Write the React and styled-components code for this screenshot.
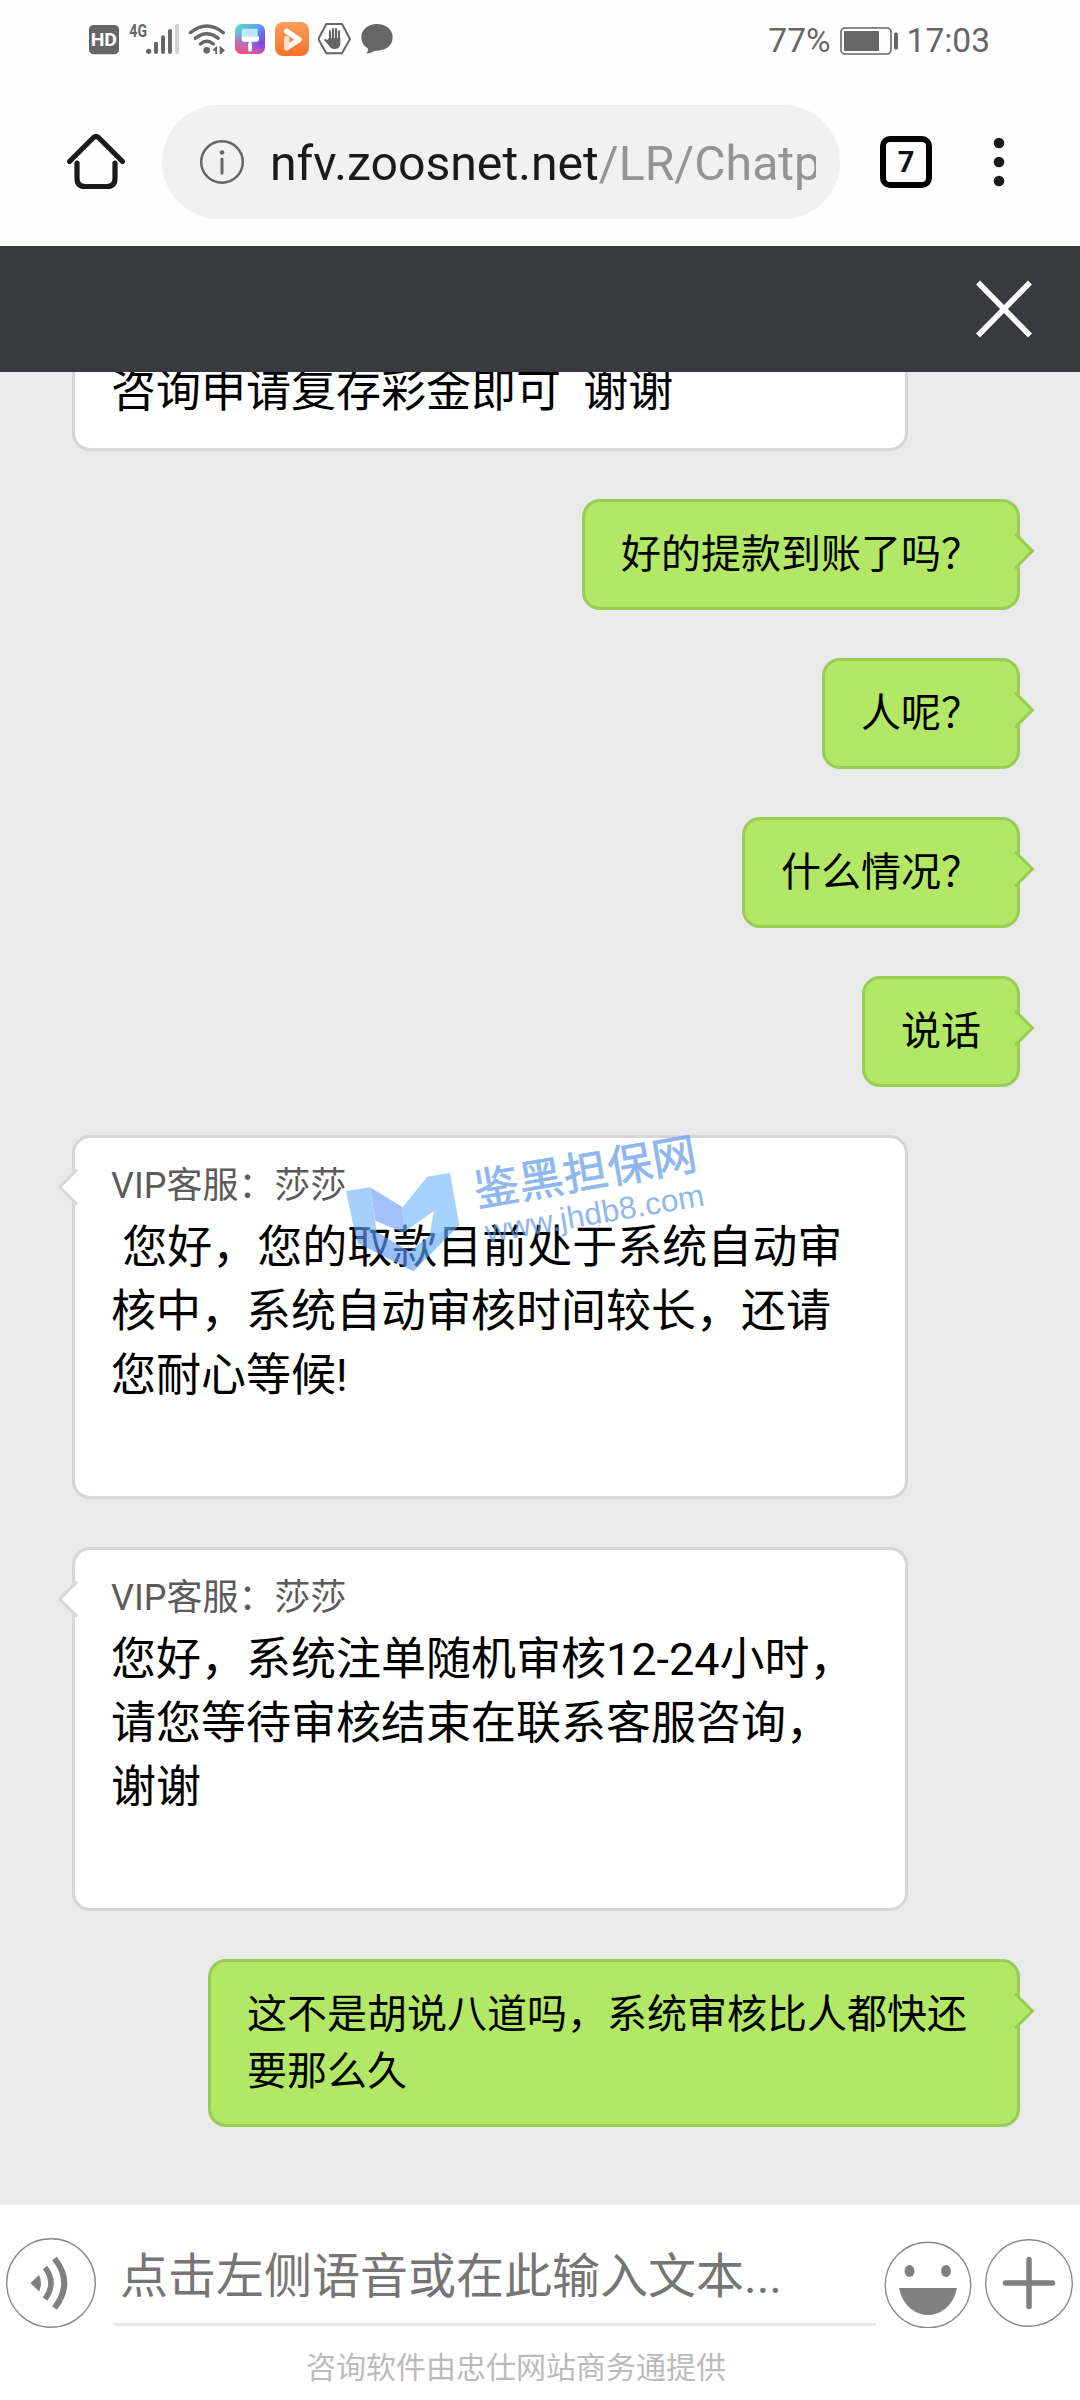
import styled, { createGlobalStyle } from 'styled-components'

const GlobalStyle = createGlobalStyle`
    * {
        box-sizing: border-box;
    }

    body {
        margin: 0;
        background: #fefefe;
        font-family: Roboto, "Noto Sans CJK SC", sans-serif;
    }
`

const Page = styled.div`
    display: flex;
    flex-direction: column;
    height: 2400px;
    overflow: hidden;
    position: relative;
    width: 1080px;
`

const StatusBar = styled.header`
    align-items: center;
    color: #666;
    display: flex;
    height: 80px;
    justify-content: space-between;
    padding: 0 90px 0 89px;
`

const StatusIcons = styled.div`
    display: flex;
    gap: 9px;
`

const StatusInfo = styled.div`
    align-items: center;
    display: flex;
    font-size: 33.5px;
    gap: 9px;
    line-height: 40px;
    padding-top: 1px;
`

const BrowserBar = styled.div`
    align-items: center;
    display: flex;
    height: 166px;
    padding: 0 64px 2px;
`

const AddressBar = styled.div`
    align-items: center;
    background: #f1f1f1;
    border-radius: 57px;
    display: flex;
    flex-shrink: 0;
    gap: 25px;
    height: 114px;
    margin: 0 40px 0 34px;
    padding: 0 24px 0 37px;
    width: 678px;
`

const Url = styled.div`
    color: #949494;
    flex: 1;
    font-size: 48.2px;
    line-height: 60px;
    overflow: hidden;
    padding-top: 3px;
    white-space: nowrap;
`

const Host = styled.span`
    color: #1a1a1a;
`

const TabCount = styled.div`
    align-items: center;
    border: 6px solid #000;
    border-radius: 10px;
    color: #111;
    display: flex;
    flex-shrink: 0;
    font: bold 29px Roboto, sans-serif;
    height: 52px;
    justify-content: center;
    margin-right: 61px;
    width: 52px;
`

const TitleBar = styled.div`
    align-items: center;
    background: #393a3f;
    display: flex;
    flex-shrink: 0;
    height: 126px;
    justify-content: flex-end;
    padding-right: 46px;
`

const Chat = styled.main`
    background: #eaeaea;
    display: flex;
    flex: 1;
    flex-direction: column;
    gap: 48px;
    justify-content: flex-end;
    min-height: 0;
    overflow: hidden;
    padding: 0 60px 78px 72px;
`

const Bubble = styled.div`
    border: 3px solid;
    border-radius: 18px;
    flex-shrink: 0;
    position: relative;

    &::after {
        border: 3px solid;
        border-color: inherit;
        background: inherit;
        content: '';
        height: 23px;
        position: absolute;
        transform: rotate(45deg);
        width: 23px;
    }
`

const AgentBubble = styled(Bubble)`
    align-self: flex-start;
    background: #fff;
    border-color: #d6d6d6;
    color: #000;
    font-size: 45px;
    height: 364px;
    line-height: 64px;
    padding: 20px 36px;
    white-space: pre;
    width: 836px;

    &::after {
        border-right: 0;
        border-top: 0;
        left: -12px;
        top: 36px;
    }
`

const UserBubble = styled(Bubble)`
    align-self: flex-end;
    background: #b2e866;
    border-color: #99cc55;
    color: #000;
    font-size: 40px;
    line-height: 57px;
    max-width: 812px;
    padding: 24px 36px;

    &::after {
        border-bottom: 0;
        border-left: 0;
        right: -12px;
        top: 36px;
    }
`

const AgentName = styled.div`
    color: #5b5b5b;
    font-size: 36px;
    line-height: 57px;
    margin-bottom: 1px;
`

const Composer = styled.footer`
    background: #fff;
    flex-shrink: 0;
    height: 195px;
    padding: 33px 6px 0;
`

const InputRow = styled.div`
    align-items: center;
    display: flex;
    height: 90px;
`

const Input = styled.div`
    border-bottom: 3px solid #e8e8e8;
    color: #757575;
    font-size: 48px;
    height: 86px;
    line-height: 66px;
    margin: 0 8px 0 18px;
    padding: 4px 6px;
    white-space: nowrap;
    width: 762px;
`

const Credit = styled.div`
    color: #bbb;
    font-size: 30px;
    line-height: 40px;
    margin-top: 20px;
    padding-right: 48px;
    text-align: center;
`

const Watermark = styled.svg`
    left: 320px;
    pointer-events: none;
    position: absolute;
    top: 1110px;
`

const StatusIcon = ({ x, width, children }) => (
    <svg width={width} height="40" viewBox={`${x} 60 ${width * 3} 120`} fill="#666">
        {children}
    </svg>
)

const HdIcon = () => (
    <StatusIcon x={87} width={30}>
        <rect x="87" y="75" width="90" height="88" rx="14" />
        <text x="92" y="139" fill="#fff" fontSize="56" fontWeight="700" textLength="79" lengthAdjust="spacingAndGlyphs">HD</text>
    </StatusIcon>
)

const SignalIcon = () => (
    <StatusIcon x={204} width={51}>
        <text x="208" y="112" fontSize="54" fontWeight="700" textLength="53" lengthAdjust="spacingAndGlyphs">4G</text>
        <circle cx="266" cy="154" r="8" />
        <g stroke="#666" strokeWidth="12" strokeLinecap="round">
            <path d="M288 131V156M309 112V156M330 93V156" />
            <path d="M351 77V156" stroke="#d2d2d2" />
        </g>
    </StatusIcon>
)

const WifiIcon = () => (
    <StatusIcon x={384} width={38}>
        <g fill="none" stroke="#666" strokeWidth="10" strokeLinecap="round">
            <path d="M391 98Q440 58 490 98" />
            <path d="M406 115Q440 87 475 115" />
            <path d="M421 132Q440 116 460 132" />
        </g>
        <circle cx="440" cy="151" r="10" />
        <path d="M457 151L471 137V162H466V153ZM479 137L495 151L484 162H479Z" />
    </StatusIcon>
)

const BrushIcon = () => (
    <StatusIcon x={525} width={31}>
        <defs>
            <linearGradient id="brushTop" x1="0" y1="0" x2="1" y2="1">
                <stop offset="0" stopColor="#5fe3c8" />
                <stop offset=".45" stopColor="#5a9bf0" />
                <stop offset=".75" stopColor="#7a4be0" />
                <stop offset="1" stopColor="#b043c8" />
            </linearGradient>
            <linearGradient id="brushBottom" x1="0.1" y1="1" x2="0.4" y2="0.45">
                <stop offset="0" stopColor="#ff4a5c" />
                <stop offset=".5" stopColor="#e65aa0" stopOpacity=".8" />
                <stop offset="1" stopColor="#e65aa0" stopOpacity="0" />
            </linearGradient>
        </defs>
        <rect x="525" y="72" width="90" height="90" rx="20" fill="url(#brushTop)" />
        <rect x="525" y="72" width="90" height="90" rx="20" fill="url(#brushBottom)" />
        <path d="M550 86H593V109H545V91Q545 86 550 86Z" fill="#bfe6fb" />
        <path d="M545 109H597V118Q597 125 590 125H575V130H566V125H552Q545 125 545 118Z" fill="#fff" />
        <path d="M570 133V149" stroke="#fff" strokeWidth="11" strokeLinecap="round" />
    </StatusIcon>
)

const VideoIcon = () => (
    <StatusIcon x={645} width={34}>
        <defs>
            <linearGradient id="video" x1="0" y1="0" x2="0" y2="1">
                <stop offset="0" stopColor="#f9a05a" />
                <stop offset="1" stopColor="#f4702a" />
            </linearGradient>
        </defs>
        <rect x="645" y="66" width="102" height="102" rx="24" fill="url(#video)" />
        <path d="M680 94L717 119L680 143" fill="none" stroke="#fff" strokeWidth="16" strokeLinejoin="round" strokeLinecap="round" />
        <path d="M680 115V143" stroke="#fde0cb" strokeWidth="16" strokeLinecap="round" />
    </StatusIcon>
)

const HandIcon = () => (
    <StatusIcon x={774} width={34}>
        <path d="M799 72H846L870 117L846 160H799L775 117Z" fill="none" stroke="#666" strokeWidth="6" strokeLinejoin="round" />
        <g stroke="#666" strokeLinecap="round" strokeWidth="6.5" fill="none">
            <path d="M810 120V94M819 120V87M828 120V87M837 120V94M808 132L796 120" />
        </g>
        <path d="M807 114H841V130Q841 147 825 147Q813 147 807 137L798 124Z" />
    </StatusIcon>
)

const MessageIcon = () => (
    <StatusIcon x={901} width={32}>
        <path d="M949 72C976 72 996 89 996 112C996 136 976 152 950 152C942 152 938 154 933 157C928 160 922 161 917 161C922 155 923 150 921 145C909 138 902 126 902 112C902 89 922 72 949 72Z" />
    </StatusIcon>
)

const BatteryIcon = () => (
    <svg width="58" height="28" viewBox="0 0 58 28">
        <rect x="1" y="1" width="50" height="26" rx="4" fill="none" stroke="#666" strokeWidth="1.600" />
        <rect x="4" y="4" width="35" height="20" rx="1" fill="#666" />
        <rect x="54" y="5.500" width="4" height="17" rx="1.500" fill="#666" />
    </svg>
)

const HomeIcon = () => (
    <svg width="64" height="60" viewBox="0 0 64 60" fill="none" stroke="#1a1a1a" strokeWidth="5.200" strokeLinecap="round" strokeLinejoin="round">
        <path d="M5.500 29.500L29.500 5.500Q32 3.500 34.500 5.500L58.500 29.500" />
        <path d="M13 31V46Q13 54.500 21 54.500H43Q51 54.500 51 46V31" />
    </svg>
)

const InfoIcon = () => (
    <svg width="46" height="46" viewBox="0 0 46 46">
        <circle cx="23" cy="23" r="20.800" fill="none" stroke="#666" strokeWidth="2.500" />
        <circle cx="23" cy="13.500" r="2.300" fill="#666" />
        <path d="M23 20V34" stroke="#666" strokeWidth="3" strokeLinecap="round" />
    </svg>
)

const MoreIcon = () => (
    <svg width="12" height="50" viewBox="0 0 12 50" fill="#1a1a1a">
        <circle cx="6" cy="6" r="5.300" />
        <circle cx="6" cy="25" r="5.300" />
        <circle cx="6" cy="44" r="5.300" />
    </svg>
)

const CloseIcon = () => (
    <svg width="60" height="60" viewBox="0 0 60 60" stroke="#fff" strokeWidth="5.500">
        <path d="M4 3.500L56 56.500M56 3.500L4 56.500" />
    </svg>
)

const VoiceIcon = () => (
    <svg width="90" height="90" viewBox="0 0 90 90">
        <circle cx="45" cy="45" r="44.300" fill="none" stroke="#8a8a8a" strokeWidth="1.400" />
        <path d="M24.500 45L33 37Q37 45 33 53.500Z" fill="#808080" />
        <path d="M39 29.500Q51 45 39 61" fill="none" stroke="#808080" strokeWidth="5.500" />
        <path d="M48.500 20.500Q68 45 48.500 70" fill="none" stroke="#808080" strokeWidth="6" />
    </svg>
)

const SmileIcon = () => (
    <svg width="88" height="90" viewBox="0 0 88 90" fill="#808080">
        <circle cx="44" cy="47" r="42.800" fill="none" stroke="#8a8a8a" strokeWidth="1.400" />
        <ellipse cx="25.500" cy="33" rx="5" ry="6" />
        <ellipse cx="62" cy="33" rx="5" ry="6" />
        <path d="M15 50H73Q70 64 61 71Q53 77 44 77Q35 77 27 71Q18 64 15 50Z" />
    </svg>
)

const PlusIcon = styled(({ className }) => (
    <svg className={className} width="90" height="90" viewBox="0 0 90 90">
        <circle cx="45" cy="45" r="43.300" fill="none" stroke="#8a8a8a" strokeWidth="1.400" />
        <path d="M45 21.500V68.500M21.500 45H68.500" stroke="#808080" strokeWidth="5.500" strokeLinecap="round" />
    </svg>
))`
    margin-left: 12px;
`

const questions = ['好的提款到账了吗？', '人呢？', '什么情况？', '说话']

const answers = [
    '\u00a0您好，您的取款目前处于系统自动审\n核中，系统自动审核时间较长，还请\n您耐心等候!',
    '您好，系统注单随机审核12-24小时，\n请您等待审核结束在联系客服咨询，\n谢谢',
]

// The oldest message is cut by the title bar, only its last line shows
const FirstAnswer = styled(AgentBubble)`
    height: 172px;
    padding: 78px 36px 0;

    &::after {
        display: none;
    }
`

export default function App() {
    return (
        <>
            <GlobalStyle />
            <Page>
                <StatusBar>
                    <StatusIcons>
                        <HdIcon />
                        <SignalIcon />
                        <WifiIcon />
                        <BrushIcon />
                        <VideoIcon />
                        <HandIcon />
                        <MessageIcon />
                    </StatusIcons>
                    <StatusInfo>
                        <span>77%</span>
                        <BatteryIcon />
                        <span>17:03</span>
                    </StatusInfo>
                </StatusBar>

                <BrowserBar>
                    <HomeIcon />
                    <AddressBar>
                        <InfoIcon />
                        <Url><Host>nfv.zoosnet.net</Host>/LR/Chatp</Url>
                    </AddressBar>
                    <TabCount>7</TabCount>
                    <MoreIcon />
                </BrowserBar>

                <TitleBar>
                    <CloseIcon />
                </TitleBar>

                <Chat>
                    <FirstAnswer>{'咨询申请复存彩金即可\u00a0\u00a0谢谢'}</FirstAnswer>
                    {questions.map((text) => (
                        <UserBubble key={text}>{text}</UserBubble>
                    ))}
                    {answers.map((text) => (
                        <AgentBubble key={text}>
                            <AgentName>VIP客服：莎莎</AgentName>
                            {text}
                        </AgentBubble>
                    ))}
                    <UserBubble>这不是胡说八道吗，系统审核比人都快还要那么久</UserBubble>
                </Chat>

                <Composer>
                    <InputRow>
                        <VoiceIcon />
                        <Input>点击左侧语音或在此输入文本...</Input>
                        <SmileIcon />
                        <PlusIcon />
                    </InputRow>
                    <Credit>咨询软件由忠仕网站商务通提供</Credit>
                </Composer>

                <Watermark width="420" height="180" viewBox="0 0 1260 540">
                    <g opacity=".64">
                        <path d="M78 243L150 232L170 366L108 350L100 345Z" fill="#74b6fb" />
                        <path d="M150 232L248 292L250 368L166 332Z" fill="#6f9ff8" />
                        <path d="M100 345L170 366L270 425L280 484L113 399Z" fill="#5f98f5" />
                        <path d="M248 292L322 200L390 188L418 345L280 484L270 425L328 378L342 303L250 368Z" fill="#74b8fc" />
                        <path d="M328 378L418 345L280 484L270 425Z" fill="#5fa8fa" />
                    </g>
                    <g fill="#5f9ae6" opacity=".7">
                        <text transform="translate(472 290) rotate(-9.700)" fontSize="134" stroke="#5f9ae6" strokeWidth="2" textLength="674">鉴黑担保网</text>
                        <text transform="translate(502 398) rotate(-9.700)" fontSize="94" fontFamily="Liberation Sans, sans-serif" textLength="664">www.jhdb8.com</text>
                    </g>
                </Watermark>
            </Page>
        </>
    )
}
